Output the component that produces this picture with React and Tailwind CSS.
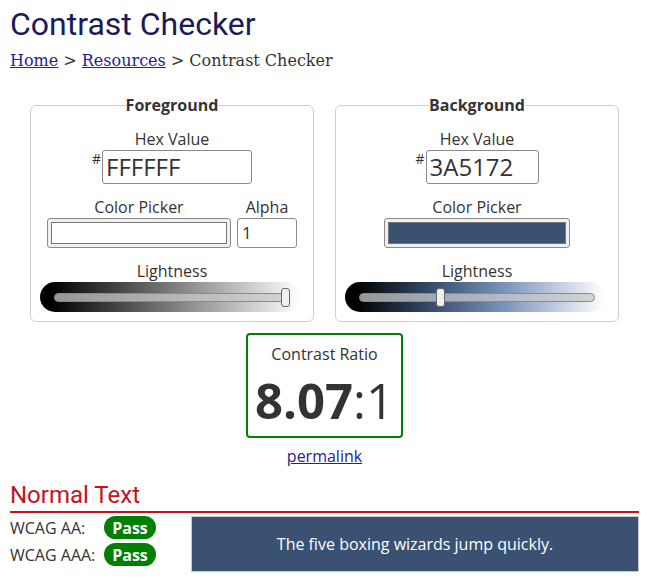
import React from 'react'

const sans = "font-['Open_Sans',sans-serif]"

function Slider({ gradient, pos }) {
  return (
    <div className="h-[30px] w-[260px] rounded-full flex items-center px-[14px] pr-[10px]" style={{ background: gradient }}>
      <div className="relative h-[9px] w-full rounded-full border border-[#8a8a8a] bg-[rgba(200,200,200,0.75)]">
        <div
          className="absolute top-[-6px] h-[19px] w-[9px] rounded-[3px] border border-[#666] bg-[#f0f0f0]"
          style={{ left: pos }}
        />
      </div>
    </div>
  )
}

function HexInput({ value, width }) {
  return (
    <div className="flex justify-center mt-[1px]">
      <span className="text-[14px] leading-none mt-[2px] mr-[1px] text-[#333]">#</span>
      <div
        className="h-[34px] rounded-[3px] border border-[#8a8a8a] flex items-center px-[3px] text-[24px] text-[#333]"
        style={{ width }}
      >
        {value}
      </div>
    </div>
  )
}

function Picker({ color, width }) {
  return (
    <div className="h-[30px] rounded-[3px] border border-[#8a8a8a] bg-[#efefef] p-[3px]" style={{ width }}>
      <div className="h-full w-full border border-[#777]" style={{ background: color }} />
    </div>
  )
}

export default function App() {
  return (
    <div className={`min-h-[579px] bg-white pl-[10px] pr-[8px] text-[#333] ${sans}`}>
      <h1 className="font-['Roboto',sans-serif] text-[32px] leading-none pt-[8px] text-[#1b1b57]">Contrast Checker</h1>
      <div className="mt-[11px] font-['DejaVu_Serif',serif] text-[16px] text-[#333] leading-[20px]">
        <a className="underline text-[#22229a]">Home</a> &gt; <a className="underline text-[#22229a]">Resources</a> &gt; Contrast Checker
      </div>

      <div className="mt-[24px] flex justify-center gap-[21px]">
        <fieldset className="w-[284px] rounded-[6px] border border-[#cfcfcf] text-center pb-[9px]">
          <legend className="mx-auto px-0 font-bold text-[16px] leading-[20px]">Foreground</legend>
          <div className="text-[16px] leading-[20px] mt-[14px]">Hex Value</div>
          <HexInput value="FFFFFF" width="150px" />
          <div className="flex justify-center gap-[6px] mt-[12px]">
            <div className="flex flex-col items-center">
              <div className="text-[16px] leading-[22px]">Color Picker</div>
              <Picker color="#ffffff" width="184px" />
            </div>
            <div className="flex flex-col items-center">
              <div className="text-[16px] leading-[22px]">Alpha</div>
              <div className="h-[30px] w-[60px] rounded-[3px] border border-[#8a8a8a] flex items-center px-[4px] text-[17px]">1</div>
            </div>
          </div>
          <div className="text-[16px] leading-[22px] mt-[12px]">Lightness</div>
          <div className="flex justify-start pl-[9px]">
            <Slider gradient="linear-gradient(to right, #000 0%, #000 4%, #ffffff 100%)" pos="226px" />
          </div>
        </fieldset>

        <fieldset className="w-[284px] rounded-[6px] border border-[#cfcfcf] text-center pb-[9px]">
          <legend className="mx-auto px-0 font-bold text-[16px] leading-[20px]">Background</legend>
          <div className="text-[16px] leading-[20px] mt-[14px]">Hex Value</div>
          <HexInput value="3A5172" width="113px" />
          <div className="flex justify-center mt-[12px]">
            <div className="flex flex-col items-center">
              <div className="text-[16px] leading-[22px]">Color Picker</div>
              <Picker color="#3a5172" width="186px" />
            </div>
          </div>
          <div className="text-[16px] leading-[22px] mt-[12px]">Lightness</div>
          <div className="flex justify-start pl-[9px]">
            <Slider gradient="linear-gradient(to right, #000 0%, #000 4%, #3a5172 35%, #7d95bc 62%, #ffffff 100%)" pos="76px" />
          </div>
        </fieldset>
      </div>

      <div className="flex flex-col items-center mt-[11px]">
        <div className="w-[157px] h-[105px] rounded-[4px] border-2 border-[#008000] flex flex-col items-center">
          <div className="text-[16px] leading-[22px] mt-[8px]">Contrast Ratio</div>
          <div className="text-[49px] leading-[60px] mt-[5px] text-[#333]">
            <span className="font-bold">8.07</span>:1
          </div>
        </div>
        <a className="mt-[7px] text-[16px] leading-[22px] underline text-[#22229a]">permalink</a>
      </div>

      <h2 className="mt-[13px] font-['Roboto',sans-serif] text-[24px] leading-[30px] text-[#c4141c] pb-[1px]">Normal Text</h2>
      <div className="h-[2px] bg-[#c8101c]" />
      <div className="mt-[3px] flex">
        <div className="w-[181px] flex flex-col gap-[4px]">
          <div className="flex items-center h-[23px]">
            <span className="w-[94px] text-[16px]">WCAG AA:</span>
            <span className="h-[23px] w-[52px] rounded-full bg-[#008000] text-white font-bold text-[16px] flex items-center justify-center">Pass</span>
          </div>
          <div className="flex items-center h-[23px]">
            <span className="w-[94px] text-[16px]">WCAG AAA:</span>
            <span className="h-[23px] w-[52px] rounded-full bg-[#008000] text-white font-bold text-[16px] flex items-center justify-center">Pass</span>
          </div>
        </div>
        <div className="flex-1 h-[56px] border border-[#c8c8c8] bg-[#3a5172] text-white text-[16px] flex items-center justify-center">
          The five boxing wizards jump quickly.
        </div>
      </div>
    </div>
  )
}
